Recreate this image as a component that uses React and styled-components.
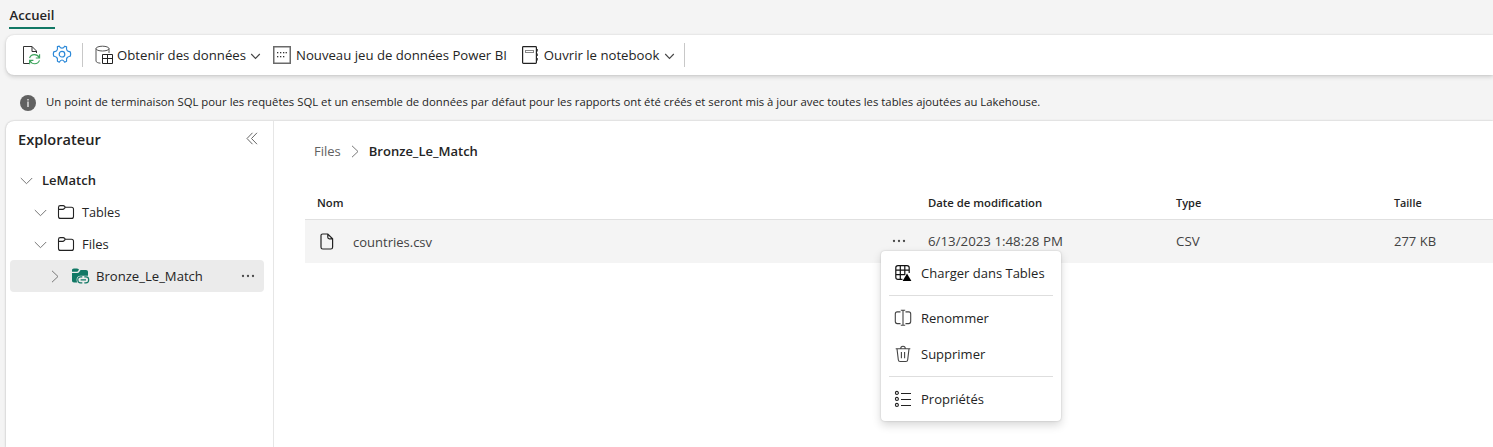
import React from "react";
import styled, { createGlobalStyle } from "styled-components";

const GlobalStyle = createGlobalStyle`
  * { box-sizing: border-box; }
  body {
    margin: 0;
    background: #f4f4f4;
    color: #242424;
    font-family: "Open Sans", "Noto Sans", sans-serif;
  }
  svg { display: block; flex: none; }
`;

const Page = styled.div`
  height: 447px;
  display: flex;
  flex-direction: column;
  overflow: hidden;
`;

const Text = styled.span`
  font-size: ${(p) => p.$size || 13}px;
  font-weight: ${(p) => p.$weight || 400};
  color: ${(p) => p.$color || "inherit"};
  line-height: 20px;
  white-space: nowrap;
`;

const TabBar = styled.nav`
  height: 35px;
  flex: none;
  padding: 5px 0 0 9px;
  display: flex;
  align-items: flex-start;
`;

const Tab = styled.button`
  border: 0;
  background: none;
  padding: 0 0 2px;
  height: 24px;
  width: 46px;
  border-bottom: 2px solid #117865;
  font: 600 13.1px/20px "Open Sans", sans-serif;
  color: #242424;
`;

const Toolbar = styled.div`
  height: 40px;
  flex: none;
  margin-left: 6px;
  padding-left: 16px;
  display: flex;
  align-items: center;
  background: #fff;
  border-radius: 8px 0 0 8px;
  box-shadow: 0 2px 4px rgba(0, 0, 0, 0.15), 0 0 2px rgba(0, 0, 0, 0.12);
`;

const ToolButton = styled.button`
  border: 0;
  background: none;
  padding: 0;
  margin-left: ${(p) => p.$ml || 0}px;
  display: flex;
  align-items: center;
  gap: ${(p) => p.$gap || 4}px;
  color: #242424;
  font-family: inherit;
  font-size: 13.18px;
  line-height: 20px;
  white-space: nowrap;
`;

const ToolDivider = styled.span`
  width: 1px;
  height: 24px;
  background: #c8c8c8;
  margin-left: ${(p) => p.$ml}px;
`;

const Notice = styled.div`
  height: 46px;
  flex: none;
  display: flex;
  align-items: center;
  gap: 10px;
  padding: 8px 0 0 20px;
`;

const Workspace = styled.div`
  flex: 1;
  min-height: 0;
  margin-left: 6px;
  display: flex;
  background: #fff;
  border-radius: 8px 0 0 0;
  box-shadow: 0 0 2px rgba(0, 0, 0, 0.22), 0 1px 3px rgba(0, 0, 0, 0.1);
`;

const Explorer = styled.aside`
  width: 268px;
  flex: none;
  border-right: 1px solid #e6e6e6;
  padding: 0 9px 0 4px;
`;

const ExplorerHeader = styled.header`
  height: 43px;
  padding: 0 6px 8px 8px;
  display: flex;
  align-items: center;
  justify-content: space-between;
`;

const TreeRow = styled.div`
  height: 32px;
  display: flex;
  align-items: center;
  padding: 0 9px 0 ${(p) => p.$indent}px;
  border-radius: 4px;
  background: ${(p) => (p.$selected ? "#ebebeb" : "transparent")};
`;

const TreeIcon = styled.span`
  width: 18px;
  margin: 0 7px 0 ${(p) => p.$ml || 10}px;
`;

const TreeLabel = styled(Text)`
  flex: 1;
  margin-left: ${(p) => p.$ml || 0}px;
`;

const Content = styled.main`
  flex: 1;
  min-width: 0;
  padding: 20px 0 0 31px;
`;

const Breadcrumb = styled.div`
  height: 20px;
  padding-left: 9px;
  display: flex;
  align-items: center;
  gap: 10px;
`;

const Row = styled.div`
  display: grid;
  grid-template-columns: 48px 539px 36px 248px 218px 1fr;
  align-items: center;
`;

const HeadRow = styled(Row)`
  height: 59px;
  padding-top: 26px;
  border-bottom: 1px solid #e0e0e0;
`;

const FileRow = styled(Row)`
  height: 43px;
  background: #f4f4f4;
  color: #424242;
`;

const Cell = styled.div`
  display: flex;
  align-items: center;
  padding-left: ${(p) => p.$pl || 0}px;
  padding-bottom: ${(p) => p.$pb || 0}px;
`;

const MenuAnchor = styled.div`
  position: relative;
  align-self: stretch;
  display: flex;
  align-items: center;
  padding-bottom: 2px;
`;

const Menu = styled.div`
  position: absolute;
  top: 31px;
  left: -11px;
  width: 180px;
  height: 170px;
  padding: 4px 8px;
  background: #fff;
  color: #242424;
  border-radius: 4px;
  box-shadow: 0 0 2px rgba(0, 0, 0, 0.2), 0 4px 10px rgba(0, 0, 0, 0.16);
`;

const MenuItem = styled.div`
  height: 36px;
  padding-left: 5px;
  display: flex;
  align-items: center;
  gap: 9px;
`;

const MenuDivider = styled.div`
  height: 1px;
  margin: 4px 0;
  background: #dedede;
`;

const Svg = ({ w = 18, h = w, color = "#333", sw = 1, children }) => (
  <svg width={w} height={h} viewBox={`0 0 ${w} ${h}`} fill="none" stroke={color} strokeWidth={sw}>
    {children}
  </svg>
);

const RefreshFileIcon = () => (
  <Svg w={20} h={20}>
    <path d="M7 18.5H1.5V1.5H10L14.5 6V8M10 1.5V6.5H14.5" />
    <g stroke="#3aa35a" strokeWidth="1.1">
      <path d="M7.6 13C8.2 10.9 10.2 9.6 12.5 9.6C14.6 9.6 16.2 10.6 17.4 12.6M17.6 9.2V13H13.8" />
      <path d="M17.5 15.4C16.8 17.4 15 18.7 12.7 18.7C10.7 18.7 9 17.7 7.9 15.7M7.6 19.3V15.4H11.4" />
    </g>
  </Svg>
);

const GearIcon = () => (
  <Svg w={20} h={20} color="#2b88d8" sw={1.2}>
    <path d="M5.4 1.7L7.3 1.2C8 2.6 8.8 3.2 10 3.2C11.2 3.2 12 2.6 12.7 1.2L14.6 1.9C14.3 3.6 14.4 4.8 15.2 5.6C16 6.4 17 6.5 18.3 6.9L18.7 9L18.3 11.1C17 11.5 16 11.7 15.2 12.5C14.4 13.4 14.3 14.5 14.6 16.2L12.7 17.2C12 15.8 11.2 15 10 15C8.8 15 8 15.8 7.3 17.2L5.4 16.2C5.7 14.5 5.6 13.4 4.8 12.5C4 11.7 3 11.5 1.7 11.1L1.3 9L1.7 6.9C3 6.5 4 6.4 4.8 5.6C5.6 4.8 5.7 3.6 5.4 1.9Z" strokeLinejoin="round" />
    <circle cx="10" cy="9.2" r="2.8" />
  </Svg>
);

const DatabaseTableIcon = () => (
  <Svg w={18} h={20} color="#555">
    <ellipse cx="7.5" cy="3.6" rx="6.5" ry="2.4" />
    <path d="M1 3.6V16C1 17.2 3 18 5.5 18.2M14 3.6V8" />
    <path d="M7.5 9.5H17.5V18.5H7.5ZM7.5 13.5H17.5M12.5 9.5V18.5" stroke="#222" />
  </Svg>
);

const DatasetIcon = () => (
  <Svg w={18} h={18}>
    <rect x="0.75" y="0.75" width="16.5" height="16.5" stroke="#6a6a6a" strokeWidth="1.5" />
    <g fill="#333" stroke="none">
      {[4, 7, 10, 12.6].map((x) => <rect key={`t${x}`} x={x} y="6" width="1.3" height="1.3" />)}
      {[4, 7, 10].map((x) => <rect key={`b${x}`} x={x} y="10" width="1.3" height="1.3" />)}
    </g>
  </Svg>
);

const NotebookIcon = () => (
  <Svg w={17} h={18}>
    <rect x="0.6" y="0.6" width="13.8" height="16.8" rx="0.8" stroke="#222" strokeWidth="1.2" />
    <rect x="3.5" y="4.5" width="8" height="2" stroke="#888" />
    <path d="M15.3 3V5.5M15.3 7.5V10M15.3 12V14.5" stroke="#333" />
  </Svg>
);

const InfoIcon = () => (
  <svg width="16" height="17" viewBox="0 -1 16 17">
    <circle cx="8" cy="8" r="8" fill="#616161" />
    <path d="M7.2 3.9H8.8V5.4H7.2ZM7.2 6.6H8.8V12H7.2Z" fill="#d5d5d5" />
  </svg>
);

const ToolChevron = () => (
  <Svg w={11} h={10} color="#444" sw={1.1}>
    <path d="M1.2 4L5.5 8.4L9.8 4" />
  </Svg>
);

const ChevronDown = () => (
  <Svg w={13} h={10} color="#777">
    <path d="M0.8 3L6.5 8.7L12.2 3" />
  </Svg>
);

const ChevronRight = () => (
  <Svg w={8} h={14} color="#777">
    <path d="M1 1.8L7 7.5L1 13.2" />
  </Svg>
);

const CollapseIcon = () => (
  <Svg w={12} h={13} color="#666">
    <path d="M6.5 0.8L1 6.5L6.5 12.2M11 0.8L5.5 6.5L11 12.2" />
  </Svg>
);

const FolderIcon = () => (
  <Svg w={18} h={16} color="#222" sw={1.1}>
    <path d="M1.5 3.5C1.5 2.3 2.1 1.6 3.3 1.6H6.2C6.9 1.6 7.2 1.8 7.6 2.3L8.3 3.2H14.5C15.8 3.2 16.5 4 16.5 5.2V12.4C16.5 13.7 15.8 14.4 14.5 14.4H3.5C2.2 14.4 1.5 13.7 1.5 12.4Z" />
    <path d="M1.5 5.4H5.7C6.4 5.4 6.8 5.2 7.2 4.7L8.3 3.3" />
  </Svg>
);

const LinkedFolderIcon = () => (
  <svg width="18" height="16" viewBox="0 0 18 16">
    <path d="M0 2.4C0 1.2 .7.5 1.9.5H5C5.6.5 6 .7 6.4 1.1L7 1.8 5.4 3.8H0ZM0 5H5.5C6.2 5 6.6 4.7 7 4.2L8.6 2.1H14C15.3 2.1 16 2.9 16 4.1V7.8H8.5C6.3 7.8 4.6 9.3 4.6 11.5C4.6 12.7 4.8 13.7 5.3 14.5H2C.7 14.5 0 13.8 0 12.5Z" fill="#117865" />
    <g fill="none" stroke="#117865" strokeWidth="1.2">
      <path d="M10.3 8.9H8.6C6.9 8.9 5.8 10.1 5.8 11.7S6.9 14.8 8.6 14.8H10.3M12.3 8.9H13.9C15.6 8.9 16.7 10.1 16.7 11.7S15.6 14.8 13.9 14.8H12.3M8.6 11.8H14" />
    </g>
  </svg>
);

const FileIcon = () => (
  <Svg w={14} h={17} color="#222" sw={1.2}>
    <path d="M7.8 1H2.8C1.6 1 1 1.6 1 2.8V14.2C1 15.4 1.6 16 2.8 16H10.8C12 16 12.6 15.4 12.6 14.2V5.8ZM7.8 1V4.3C7.8 5.3 8.3 5.8 9.3 5.8H12.6" />
  </Svg>
);

const MoreIcon = () => (
  <svg width="14" height="4" viewBox="0 0 14 4" fill="#4a4a4a">
    <circle cx="2" cy="2" r="1.15" />
    <circle cx="7" cy="2" r="1.15" />
    <circle cx="12" cy="2" r="1.15" />
  </svg>
);

const LoadTableIcon = () => (
  <Svg w={18} h={18} color="#111" sw={1.2}>
    <path d="M8.5 15.4H4C2.6 15.4 1.8 14.6 1.8 13.2V3.8C1.8 2.4 2.6 1.6 4 1.6H13C14.4 1.6 15.2 2.4 15.2 3.8V9M1.8 6.1H15.2M1.8 10.7H11M6.3 1.6V15.4M10.8 1.6V11" />
    <path d="M13 9.4L17.4 17H8.6Z" fill="#000" stroke="none" />
  </Svg>
);

const RenameIcon = () => (
  <Svg w={18} h={18} color="#444" sw={1.1}>
    <path d="M6.5 2.9H3.3C2 2.9 1.3 3.6 1.3 4.9V12.6C1.3 13.9 2 14.6 3.3 14.6H6.5M11.5 2.9H14.7C16 2.9 16.7 3.6 16.7 4.9V12.6C16.7 13.9 16 14.6 14.7 14.6H11.5M6.8 1.2H11.2M6.8 16.3H11.2M9 1.2V16.3" />
  </Svg>
);

const TrashIcon = () => (
  <Svg w={18} h={18} color="#444" sw={1.1}>
    <path d="M1.7 3.7H16.3M3 3.7L4.3 14.8C4.4 15.9 5 16.5 6.1 16.5H11.9C13 16.5 13.6 15.9 13.7 14.8L15 3.7M6.7 3.6C6.7 2.2 7.6 1.2 9 1.2S11.3 2.2 11.3 3.6M7.4 7V13.2M10.6 7V13.2" />
  </Svg>
);

const PropertiesIcon = () => (
  <Svg w={18} h={18} color="#222" sw={1.1}>
    <circle cx="2.9" cy="2.9" r="1.5" />
    <circle cx="2.9" cy="8.9" r="1.5" />
    <circle cx="2.9" cy="14.9" r="1.5" />
    <path d="M7 3.5H17M7 9.5H17M7 15.5H17" />
  </Svg>
);

export default function App() {
  return (
    <Page>
      <GlobalStyle />
      <TabBar>
        <Tab>Accueil</Tab>
      </TabBar>
      <Toolbar>
        <ToolButton aria-label="Actualiser"><RefreshFileIcon /></ToolButton>
        <ToolButton $ml={10} aria-label="Paramètres"><GearIcon /></ToolButton>
        <ToolDivider $ml={10} />
        <ToolButton $ml={12}>
          <DatabaseTableIcon />Obtenir des données<ToolChevron />
        </ToolButton>
        <ToolButton $ml={12} $gap={5}>
          <DatasetIcon />Nouveau jeu de données Power BI
        </ToolButton>
        <ToolButton $ml={15} $gap={5}>
          <NotebookIcon />Ouvrir le notebook<ToolChevron />
        </ToolButton>
        <ToolDivider $ml={9} />
      </Toolbar>
      <Notice>
        <InfoIcon />
        <Text $size={11.33}>
          Un point de terminaison SQL pour les requêtes SQL et un ensemble de données par défaut pour les
          rapports ont été créés et seront mis à jour avec toutes les tables ajoutées au Lakehouse.
        </Text>
      </Notice>
      <Workspace>
        <Explorer>
          <ExplorerHeader>
            <Text $size={14.6} $weight={600}>Explorateur</Text>
            <CollapseIcon />
          </ExplorerHeader>
          <TreeRow $indent={10}>
            <ChevronDown />
            <TreeLabel $ml={9} $weight={600}>LeMatch</TreeLabel>
          </TreeRow>
          <TreeRow $indent={24}>
            <ChevronDown />
            <TreeIcon><FolderIcon /></TreeIcon>
            <TreeLabel $size={12.7}>Tables</TreeLabel>
          </TreeRow>
          <TreeRow $indent={24}>
            <ChevronDown />
            <TreeIcon><FolderIcon /></TreeIcon>
            <TreeLabel>Files</TreeLabel>
          </TreeRow>
          <TreeRow $indent={41} $selected>
            <ChevronRight />
            <TreeIcon $ml={13}><LinkedFolderIcon /></TreeIcon>
            <TreeLabel $ml={-1} $size={13.1}>Bronze_Le_Match</TreeLabel>
            <MoreIcon />
          </TreeRow>
        </Explorer>
        <Content>
          <Breadcrumb>
            <Text $color="#616161">Files</Text>
            <ChevronRight />
            <Text $weight={600}>Bronze_Le_Match</Text>
          </Breadcrumb>
          <HeadRow>
            <Cell $pl={12}><Text $size={11.3} $weight={600}>Nom</Text></Cell>
            <Cell />
            <Cell />
            <Cell><Text $size={11.3} $weight={600}>Date de modification</Text></Cell>
            <Cell><Text $size={11} $weight={600}>Type</Text></Cell>
            <Cell><Text $size={10.8} $weight={600}>Taille</Text></Cell>
          </HeadRow>
          <FileRow>
            <Cell $pl={15}><FileIcon /></Cell>
            <Cell><Text>countries.csv</Text></Cell>
            <MenuAnchor>
              <MoreIcon />
              <Menu>
                <MenuItem><LoadTableIcon /><Text>Charger dans Tables</Text></MenuItem>
                <MenuDivider />
                <MenuItem><RenameIcon /><Text>Renommer</Text></MenuItem>
                <MenuItem><TrashIcon /><Text>Supprimer</Text></MenuItem>
                <MenuDivider />
                <MenuItem><PropertiesIcon /><Text>Propriétés</Text></MenuItem>
              </Menu>
            </MenuAnchor>
            <Cell $pb={2}><Text $size={13.3}>6/13/2023 1:48:28 PM</Text></Cell>
            <Cell $pb={2}><Text $size={13.3}>CSV</Text></Cell>
            <Cell $pb={2}><Text>277 KB</Text></Cell>
          </FileRow>
        </Content>
      </Workspace>
    </Page>
  );
}
